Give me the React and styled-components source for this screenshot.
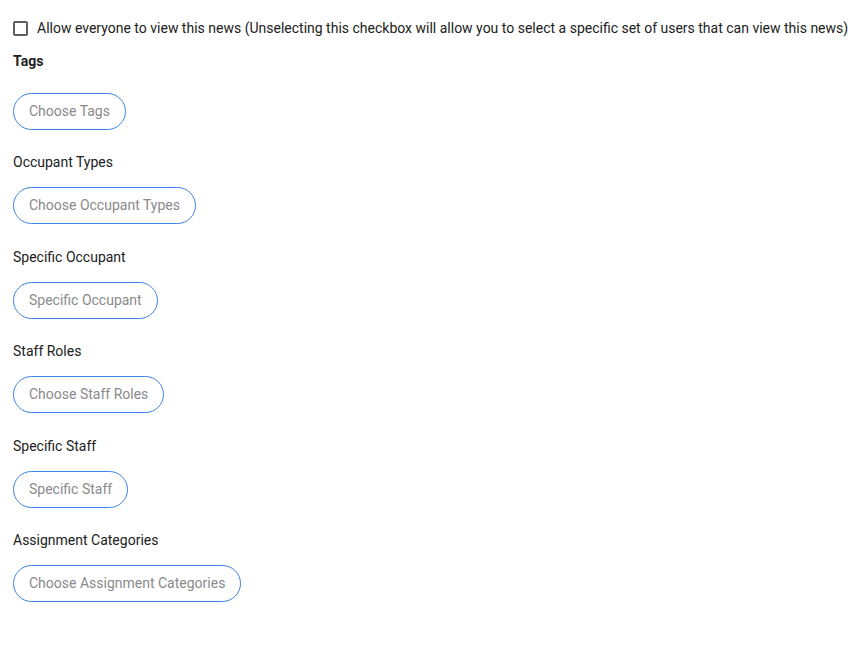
import React from "react";
import styled, { createGlobalStyle } from "styled-components";

const Global = createGlobalStyle`
  html, body { margin: 0; padding: 0; background: #fff; }
  body { font-family: Roboto, "Noto Sans", Arial, sans-serif; color: #212121; }
`;

const Page = styled.div`
  padding: 18px 0 40px 13px;
  display: flex;
  flex-direction: column;
`;

const CheckRow = styled.label`
  display: flex;
  align-items: center;
  gap: 9px;
  font-size: 14px;
  line-height: 20px;
  color: #212121;
  white-space: nowrap;
  margin-bottom: 13px;
`;

const Box = styled.span`
  width: 15px;
  height: 15px;
  box-sizing: border-box;
  border: 2px solid #5f5f5f;
  border-radius: 2px;
  flex: none;
`;

const Section = styled.div`
  display: flex;
  flex-direction: column;
  align-items: flex-start;
  gap: ${(p) => (p.$bold ? "22px" : "15px")};
  margin-bottom: 22.4px;
`;

const Label = styled.div`
  font-size: 14px;
  line-height: 20px;
  font-weight: ${(p) => (p.$bold ? 700 : 400)};
  color: #212121;
`;

const Pill = styled.button`
  font-family: Roboto, "Noto Sans", Arial, sans-serif;
  font-size: 14px;
  line-height: 19px;
  color: #8a8a8a;
  background: #fff;
  border: 1px solid #3b83e6;
  border-radius: 999px;
  padding: 8px 15px;
  cursor: pointer;
`;

const fields = [
  { label: "Tags", placeholder: "Choose Tags", bold: true },
  { label: "Occupant Types", placeholder: "Choose Occupant Types" },
  { label: "Specific Occupant", placeholder: "Specific Occupant" },
  { label: "Staff Roles", placeholder: "Choose Staff Roles" },
  { label: "Specific Staff", placeholder: "Specific Staff" },
  { label: "Assignment Categories", placeholder: "Choose Assignment Categories" },
];

export default function App() {
  return (
    <>
      <Global />
      <Page>
        <CheckRow>
          <Box />
          Allow everyone to view this news (Unselecting this checkbox will allow you to select a specific set of users that can view this news)
        </CheckRow>
        {fields.map((f) => (
          <Section key={f.label} $bold={f.bold}>
            <Label $bold={f.bold}>{f.label}</Label>
            <Pill>{f.placeholder}</Pill>
          </Section>
        ))}
      </Page>
    </>
  );
}
